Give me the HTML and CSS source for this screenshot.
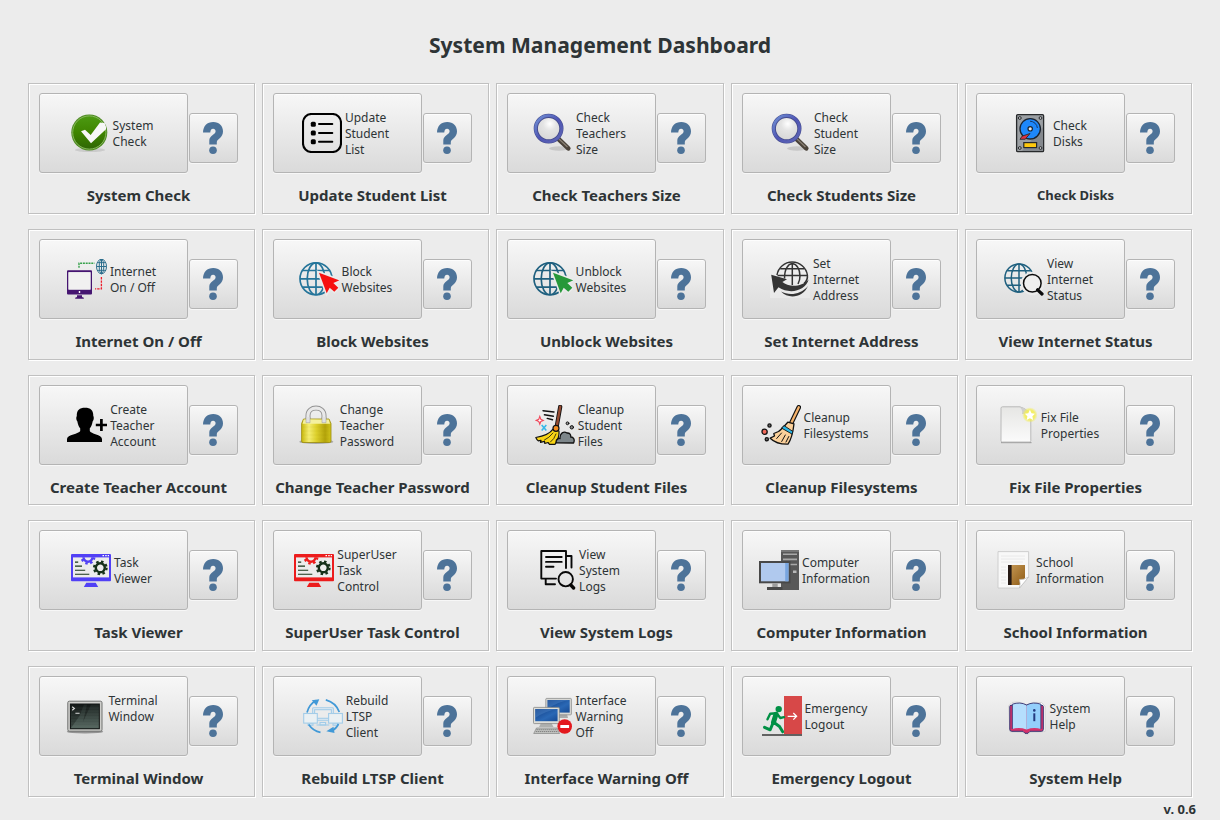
FILE: index.html
```html
<!DOCTYPE html>
<html lang="en">
<head>
<meta charset="utf-8">
<title>System Management Dashboard</title>
<link rel="stylesheet" href="styles.css">
</head>
<body>
<svg class="defs" aria-hidden="true">
  <defs>
    <linearGradient id="green" x1="0" y1="0" x2="0" y2="1"><stop offset="0" stop-color="#4c9a12"/><stop offset=".5" stop-color="#3f8500"/><stop offset="1" stop-color="#2f6605"/></linearGradient>
    <linearGradient id="ring" x1="0" y1="0" x2="1" y2="1"><stop offset="0" stop-color="#7192d6"/><stop offset=".5" stop-color="#4f55b4"/><stop offset="1" stop-color="#5e66b4"/></linearGradient>
    <radialGradient id="lens" cx=".55" cy=".3" r=".8"><stop offset="0" stop-color="#fff"/><stop offset=".35" stop-color="#e4e4e4"/><stop offset="1" stop-color="#d2d2d2"/></radialGradient>
    <linearGradient id="gold" x1="0" y1="0" x2="1" y2="0"><stop offset="0" stop-color="#c9b90c"/><stop offset=".25" stop-color="#f5ee72"/><stop offset=".5" stop-color="#ddd02c"/><stop offset=".8" stop-color="#b3a30a"/><stop offset="1" stop-color="#d2c51c"/></linearGradient>
    <linearGradient id="page" x1="0" y1="0" x2="0" y2="1"><stop offset="0" stop-color="#e6e6e4"/><stop offset="1" stop-color="#fbfbfb"/></linearGradient>
    <radialGradient id="glow"><stop offset="0" stop-color="#f6f05a"/><stop offset=".65" stop-color="#f3ee55" stop-opacity=".85"/><stop offset="1" stop-color="#f3ee55" stop-opacity="0"/></radialGradient>
    <linearGradient id="book" x1="0" y1="0" x2="1" y2="1"><stop offset="0" stop-color="#c79a56"/><stop offset="1" stop-color="#8f5c17"/></linearGradient>
    <linearGradient id="term" x1="0" y1="0" x2="0" y2="1"><stop offset="0" stop-color="#1d2422"/><stop offset="1" stop-color="#55665f"/></linearGradient>
    <linearGradient id="lcd" x1="0" y1="0" x2="1" y2="1"><stop offset="0" stop-color="#123f86"/><stop offset=".6" stop-color="#2a68b5"/><stop offset="1" stop-color="#174a94"/></linearGradient>

    <symbol id="i-help" viewBox="0 0 20 32"><path d="M0 10.6C.2 4 4 0 10.3 0 16.3 0 20 4 20 9.6 20 15.8 14.2 17 13.8 20V22.5H6.3V18.5C6.3 13.7 12.6 12.6 12.6 9.3 12.6 7.8 11.6 6.8 10.1 6.8 8.2 6.8 7.4 8.2 7.3 10.6Z"/><circle cx="10" cy="28.2" r="3.8"/></symbol>

    <symbol id="i-check" viewBox="0 0 40 40"><ellipse cx="20" cy="37" rx="15" ry="2" fill="#000" opacity=".1"/><circle cx="19.3" cy="19.5" r="18" fill="#4d8a21"/><circle cx="19.3" cy="19.5" r="16.6" fill="url(#green)" stroke="#8dbc63" stroke-width=".9"/><path d="M11 18.2 15 16.7 20.7 22.1 30 9.4 34.6 9.9 36 13.8 36 16.3 21 30.3Z" fill="#f7f7f7"/></symbol>

    <symbol id="i-list" viewBox="0 0 40 40"><rect x="1" y="1" width="38" height="38" rx="8.5" fill="none" stroke="#000" stroke-width="2.1"/><rect x="8.8" y="8.8" width="5" height="5" rx="1.5"/><rect x="8.8" y="17.4" width="5" height="5" rx="1.5"/><rect x="8.8" y="26.2" width="5" height="5" rx="1.5"/><path d="M17 11.1H30.3M17 19.9H30.3M17 28.7H30.3" stroke="#000" stroke-width="2" stroke-linecap="round"/></symbol>

    <symbol id="i-search" viewBox="0 0 40 40"><ellipse cx="26" cy="35.5" rx="10" ry="2.2" fill="#000" opacity=".12"/><path d="M25.5 26 35.3 35.3" stroke="#4a4239" stroke-width="4.6" stroke-linecap="round"/><path d="M25.5 25.5 34.5 34" stroke="#8a8175" stroke-width="1.2"/><circle cx="15.6" cy="15.6" r="12" fill="url(#lens)"/><circle cx="15.6" cy="15.6" r="12.8" fill="none" stroke="#434a8c" stroke-width="4.2"/><circle cx="15.6" cy="15.6" r="13" fill="none" stroke="url(#ring)" stroke-width="2.8"/></symbol>

    <symbol id="i-disk" viewBox="0 0 40 40"><rect x="6.6" y="1.6" width="27" height="37" rx="1.2" fill="#9b9fa3" stroke="#27292b" stroke-width="1.3"/><path d="M33 14V38H12Z" fill="#85898e"/><g fill="#c3c5c8" stroke="#27292b"><circle cx="9.8" cy="5" r="1.4"/><circle cx="30.5" cy="5" r="1.4"/><circle cx="9.8" cy="35" r="1.4"/><circle cx="30.5" cy="35" r="1.4"/></g><circle cx="20.2" cy="15.8" r="10.2" fill="#1e88fb" stroke="#1b2430" stroke-width="1.3"/><path d="M20 8.2A7.6 7.6 0 0 1 27.4 15" fill="none" stroke="#173a6b" stroke-width="1"/><circle cx="20.2" cy="15.8" r="2.2" fill="#e9e9e9" stroke="#1b2430" stroke-width="1.2"/><path d="M10 26.3 12 23.2 20 20.5 15.3 26.2Z" fill="#e0303f" stroke="#27292b" stroke-width=".9"/><rect x="13.8" y="29.6" width="12.8" height="5" fill="#ffc90d" stroke="#27292b" stroke-width="1.2"/></symbol>

    <symbol id="globe" viewBox="0 0 34 34"><g fill="none" stroke="currentColor" stroke-width="1.7"><circle cx="17" cy="17" r="16"/><ellipse cx="17" cy="17" rx="8.8" ry="16"/><path d="M17 1V33M1 17H33M3.6 8.7H30.4M3.6 25.3H30.4"/></g></symbol>

    <symbol id="i-net" viewBox="0 0 40 40"><path d="M0 12.3Q0 11.3 1 11.3H24Q25 11.3 25 12.3V34.4Q25 35.4 24 35.4H1Q0 35.4 0 34.4ZM1.5 13.2V30.6H23.5V13.2Z" fill="#451571" fill-rule="evenodd"/><rect x="1.5" y="13.2" width="22" height="17.4" fill="#f1f1f1"/><rect x="11.8" y="32" width="1.4" height="2" fill="#fff"/><path d="M10 36.3H15V38L16.8 38.8V39.8H8.2V38.8L10 38Z" fill="#451571"/><path d="M12 8.7V4.2H27.5" fill="none" stroke="#35a14a" stroke-width="1.4" stroke-dasharray="2 .8"/><path d="M34.4 18V29.8H28" fill="none" stroke="#ec1c2b" stroke-width="1.3" stroke-dasharray="2.4 1"/><g fill="none" stroke="#2b6d8c" stroke-width="1"><ellipse cx="34.5" cy="7.5" rx="5" ry="7.3"/><ellipse cx="34.5" cy="7.5" rx="2.3" ry="7.3"/><path d="M34.5 0V15M29.5 7.5H39.5M30.3 3.7H38.7M30.3 11.3H38.7"/></g></symbol>

    <symbol id="i-web" viewBox="0 0 40 40"><use href="#globe" x="0" y="2.8" width="34" height="34"/><path d="M20 13.7 40.3 21.3 34.3 24 39.3 28.7 35.3 32.7 30.7 28.7 27.7 34.3Z" fill="var(--cursor)" stroke="#ebebeb" stroke-width="3" paint-order="stroke"/></symbol>

    <symbol id="i-setip" viewBox="0 0 40 40"><rect x="0" y="2" width="40" height="37" fill="#efefef" opacity=".6"/><g fill="none" stroke="#333" stroke-width="1.5"><path d="M7 16A15.4 15.4 0 0 1 37.4 16Q38 21 34 24.5"/><path d="M14.5 19.5C14.5 10 18 5 22.3 4.5 26.7 5 30 10 30 17 30 21 29 23 28 25M22.3 4V26M7.5 16.5H37M10.2 9.8H34.4"/></g><path d="M1.2 15.7 17 20.2 12.4 23C18 28 31 28.8 38.6 20.5 36 31.5 20 36 8.5 28.3L4 34Z" fill="#353535"/><path d="M11 32.6C19 37 31 35.7 38 27 33.5 38 19 41 11 32.6Z" fill="#353535"/></symbol>

    <symbol id="i-netview" viewBox="0 0 40 40"><use href="#globe" x="0" y="4" width="30" height="30"/><circle cx="28.5" cy="24.5" r="11.8" fill="#ebebeb"/><circle cx="28.3" cy="24.3" r="8.8" fill="#efefef" stroke="#0b0b0b" stroke-width="1.5"/><path d="M33.6 30.8 38 35" stroke="#0b0b0b" stroke-width="3.2" stroke-linecap="round"/></symbol>

    <symbol id="i-user" viewBox="0 0 40 40"><path d="M18 2.8C23.5 2.8 26.4 5.2 26.3 11 27.2 12 26.8 15.5 25.7 16.2 25 20 24 21.8 22.8 23.3V26C23.5 29 35 29.4 35 34V37H0V34C0 29.4 12.3 29 13.2 26V23.3C12 21.8 11 20 10.3 16.2 9.2 15.5 8.9 12 9.8 11 9.6 5.2 12.5 2.8 18 2.8Z"/><path d="M34.4 14V26M28.8 20H40" stroke="#000" stroke-width="2.7"/></symbol>

    <symbol id="i-lock" viewBox="0 0 40 40"><ellipse cx="19.3" cy="36.7" rx="17" ry="2.3" opacity=".25"/><path d="M11 17V10.5C11 .6 27 .6 27 10.5V17" fill="none" stroke="#929292" stroke-width="5"/><path d="M11 17V10.5C11 .6 27 .6 27 10.5V17" fill="none" stroke="#e9e9e9" stroke-width="3.2"/><path d="M6.5 14H32L34 18.5V36Q34 37.5 32.5 37.5H6Q4.6 37.5 4.6 36V18.5Z" fill="url(#gold)" stroke="#9a8b0b" stroke-width=".8"/><path d="M6.8 14.4H31.8L33 18.8H5.6Z" fill="#f4f0a0"/><path d="M9 12V17.7H13V12M25 12V17.7H29V12" fill="#e1e1e1" stroke="#999" stroke-width=".5"/><path d="M6 22H33M6 26H33M6 30H33M6 34H33" stroke="#988a05" stroke-width=".5" opacity=".15"/></symbol>

    <symbol id="i-sweep" viewBox="0 0 40 40"><g stroke="#111" stroke-linejoin="round" stroke-linecap="round"><path d="M8 5.7 19 7M9.4 9.8 18.4 11.2M12.2 13.4 17.5 14.8" stroke-width="1.4"/><path d="M25.2 1.8 21.8 21" stroke-width="4.2"/><path d="M25.2 1.8 21.8 21" stroke="#954b32" stroke-width="2.4"/><path d="M18 24.2C14 30 7 31.5 .8 32.5 1.5 34 2 35 3.2 35.8L6 35.3 5.5 37.3 9.5 36.4 9.8 38.5 13 37.5 14.5 39.3H20C23 35 24.5 31 24 26Z" fill="#f8d414" stroke-width="1.2"/><path d="M18 28Q14 33 9.5 35M21 29Q19.5 34 15.5 37" fill="none" stroke-width=".8"/><circle cx="21" cy="23.3" r="3" fill="#f28a1d" stroke-width="1.2"/><path d="M21.2 37.8C20.5 34 24 33.3 25 33.5 24.5 28 29 25.8 32 28 35 27.8 36 30 35.7 32 38.8 32 40 35 38.6 38Z" fill="#7d868a" stroke-width="1.3"/><circle cx="32.5" cy="18.3" r="1.4" fill="#999"/><circle cx="36.8" cy="22.3" r="1.7" fill="#888"/></g><path d="M4.8 11.4 5.8 14.3 8.3 15.4 5.8 16.5 4.8 19.2 3.8 16.5 1.2 15.4 3.8 14.3Z" fill="#fff" stroke="#f1485b" stroke-width="1.1"/><path d="M6.7 20 11.3 25.5M11.3 20 6.7 25.5" stroke="#35b7e8" stroke-width="1.6"/></symbol>

    <symbol id="i-broom" viewBox="0 0 40 40"><g stroke="#111" stroke-linejoin="round" stroke-linecap="round"><path d="M37.8 2.3 30.5 17.5" stroke-width="4.6"/><path d="M37.8 2.3 30.5 17.5" stroke="#f5b36d" stroke-width="2.3"/><path d="M26.8 17.2 33 18.8C32.3 25 31.3 33 27 39.2 18 39.4 12.5 36.5 9.2 33.2L13.5 31 12.8 28.5 17.5 26.5C20.8 24 23.5 21 26.8 17.2Z" fill="#fbd09a" stroke-width="1.3"/><path d="M23.3 20.8 31.8 26.4 31.2 29.2 20.8 23.2Z" fill="#29b5e6" stroke-width=".9"/><path d="M20.5 28 15.7 33.5M24.3 30 20.7 36.5M27.8 31.5 25 37" fill="none" stroke-width="1"/><circle cx="3.6" cy="26.8" r="2.6" fill="#f26a5a" stroke-width="1.3"/><circle cx="8.5" cy="20.5" r="1.6" fill="#666" stroke-width="1.3"/><circle cx="5.8" cy="34.3" r="1.6" fill="#666" stroke-width="1.3"/></g></symbol>

    <symbol id="i-file" viewBox="0 0 40 40"><path d="M3 37H33.5V38.2H3Z" fill="#777" opacity=".6"/><path d="M4.5 1.8H22Q32.8 5 32.8 14V35.5Q32.8 37 31.3 37H4.5Q3 37 3 35.5V3.3Q3 1.8 4.5 1.8Z" fill="url(#page)" stroke="#b4b4b4" stroke-width=".9"/><path d="M21 1.8Q25 4 24 9 30 8.5 32.8 14 32.5 4 21 1.8Z" fill="#cfcfcf"/><circle cx="31.9" cy="10" r="7.8" fill="url(#glow)"/><path d="M31.9 4.8 33.5 8.2 37 8.7 34.4 11.3 35.1 15 31.9 13.2 28.7 15 29.4 11.3 26.8 8.7 30.3 8.2Z" fill="#fff"/></symbol>

    <symbol id="gear" viewBox="-8 -8 16 16"><g fill="none" stroke="currentColor"><circle r="4.5" stroke-width="2.4"/><circle r="6.3" stroke-width="2.2" stroke-dasharray="2.5 2.448"/></g></symbol>

    <symbol id="i-task" viewBox="0 0 40 40"><rect x="0" y="4" width="40" height="27.2" rx="1" fill="currentColor"/><rect x="2" y="7.4" width="36" height="20" fill="#ececec"/><path d="M31.5 5.7H33M34.2 5.7H35.7M36.7 5.7H38" stroke="#fff" stroke-width="1.2"/><path d="M15.3 32.7H24.7L27.2 37H12.8Z" fill="currentColor"/><svg x="2" y="7.2" width="36" height="12"><use href="#gear" x="7" y="-8" width="16" height="16"/></svg><path d="M4 12.1H7.2M4 16.1H11M4 20.2H14.2M4 24.3H18.3" stroke="#173419" stroke-width="1.1"/><g color="#16311a"><use href="#gear" x="21.3" y="9.8" width="16" height="16"/></g></symbol>

    <symbol id="i-logs" viewBox="0 0 40 40"><g fill="none" stroke="#080808" stroke-width="1.9" stroke-linejoin="round" stroke-linecap="round"><path d="M20 28.6H5.3V1H30V18M30.2 6H35.5V17.5M9.7 29V34.3H19M10 7H25.7M10 11.9H25.7M10 16.8H17.5"/><circle cx="29.7" cy="29.2" r="7.2"/></g><path d="M34.8 35 37.6 38" stroke="#080808" stroke-width="3.3" stroke-linecap="round"/></symbol>

    <symbol id="i-pc" viewBox="0 0 40 40"><rect x="22" y="0" width="18" height="40" fill="#585858"/><path d="M24 4.3H38M24 9.4H38M24 14.5H38" stroke="#a8a8a8" stroke-width="1.6"/><path d="M22 1H40" stroke="#777" stroke-width="2"/><rect x="34" y="20.5" width="3.5" height="2.5" fill="#b9b9b9"/><rect x="0" y="11" width="31.5" height="22.3" fill="#484848"/><rect x="2" y="13" width="27.5" height="18.3" fill="#b0c9ee"/><rect x="26.2" y="13" width="3.3" height="18.3" fill="#78a5df"/><rect x="13.3" y="33.3" width="5.4" height="3.8" fill="#9d9d9d"/><rect x="8" y="37" width="15.5" height="3" fill="#484848"/></symbol>

    <symbol id="i-school" viewBox="0 0 40 40"><path d="M5 1.6H35.6V27L26.5 38H5Z" fill="#f8f8f8" stroke="#cbcbcb" stroke-width=".9"/><path d="M8 6H32M8 9H32M8 12H30M8 17H13M8 20H13M8 23H13M8 27H13M8 30H13M8 33H13" stroke="#e4e4e4" stroke-width=".8"/><path d="M15 15H32V28L26.5 35H15Z" fill="url(#book)"/><path d="M15 15H18.6V35H15Z" fill="#261a15"/><path d="M35.6 27 26.5 38Q27.8 34 26.5 29.5 31 30 35.6 27Z" fill="#fff" stroke="#bbb" stroke-width=".7"/></symbol>

    <symbol id="i-term" viewBox="0 0 40 40"><ellipse cx="20" cy="35.8" rx="18.2" ry="1.7" opacity=".35"/><rect x="2.8" y="5.2" width="34.2" height="30" rx="1.5" fill="#cfcfcc" stroke="#6e706e" stroke-width="1"/><rect x="4.9" y="7.5" width="30" height="25.8" fill="#131716"/><rect x="6" y="8.6" width="27.8" height="23.6" fill="url(#term)"/><path d="M19 8.6 14.5 20 6 32V8.6ZM26 8.6 18 26 22 8.6Z" fill="#000" opacity=".3"/><path d="M6 12H34M6 15H34M6 18H34M6 21H34M6 24H34M6 27H34M6 30H34" stroke="#a7c0b5" stroke-width=".5" opacity=".15"/><path d="M7.2 10.8 9.4 12.5 7.2 14.2M10.4 17.2H14.6" fill="none" stroke="#ddd" stroke-width="1.1"/></symbol>

    <symbol id="i-rebuild" viewBox="0 0 40 40"><g fill="#e3edf3" stroke="#a3cce8" stroke-width="1.1"><rect x="9.7" y="11.8" width="20.6" height="12.4" rx=".8"/><rect x="11.6" y="13.7" width="16.8" height="8.6" fill="#ececec"/><rect x="17" y="26.5" width="5.6" height="2.5"/><path d="M13.5 29H26.3"/><rect x=".7" y="17.5" width="13.6" height="9.6" fill="#eaf0f3"/><rect x="25.6" y="17.5" width="13.8" height="9.6" fill="#eaf0f3"/><path d="M5 27.8H10V29.2H5ZM30 27.8H35V29.2H30Z"/></g><g fill="none" stroke="#4199d7" stroke-width="1.7"><path d="M4 16.5Q6.2 8.5 12.8 4.6M22.8 3.9Q33 6.8 36.3 16M5.7 28.5Q10 35 17.5 36.3M35.5 28Q33 33 28.8 34.5"/></g><path d="M8.8 4.3 16.3 3.2 13.5 9.8ZM30.5 30.8 23.3 35.2 31.5 37Z" fill="#4199d7"/></symbol>

    <symbol id="i-iface" viewBox="0 0 40 40"><path d="M20 18H34L35 22H20Z" fill="#aaa"/><rect x="12.8" y="2.4" width="25.6" height="16.4" rx=".8" fill="#d8d8d5" stroke="#8b8d8b" stroke-width=".8"/><rect x="14.5" y="4" width="22.2" height="12.6" fill="url(#lcd)"/><path d="M14.5 4H36.7Q24 6 14.5 13Z" fill="#5d92d0" opacity=".35"/><path d="M8.5 26H18L20.5 31H6Z" fill="#aeb0ae"/><rect x=".5" y="11.4" width="25.8" height="16.2" rx=".8" fill="#deded9" stroke="#858785" stroke-width=".8"/><rect x="2.2" y="13" width="22.4" height="12.2" fill="url(#lcd)"/><path d="M2.2 13H24.6Q12 15 2.2 22Z" fill="#5d92d0" opacity=".35"/><path d="M3.5 32H24L26.5 37.5H.7Z" fill="#c4c6c3" stroke="#777" stroke-width=".6"/><path d="M3.5 33.7H24M2.8 35.6H25" stroke="#777" stroke-width=".9" stroke-dasharray="1.4 .6"/><circle cx="31.7" cy="30.5" r="7.3" fill="#e3191e"/><rect x="27.3" y="29" width="8.8" height="3" rx=".5" fill="#fff"/></symbol>

    <symbol id="i-exit" viewBox="0 0 40 40"><rect x="22" y="0" width="18" height="38.2" fill="#d74848"/><rect x="0" y="38.1" width="40" height="1.8" fill="#555"/><circle cx="16.7" cy="13.1" r="3.2" fill="#009045"/><g fill="none" stroke="#009045" stroke-linecap="round" stroke-linejoin="round"><path d="M14 18.2 11.5 26.2" stroke-width="5"/><path d="M14.3 17.2 8.2 17.8 5.5 23.3M15.8 18.8 18.3 22 22 21.2" stroke-width="2.4"/><path d="M11 27 8.2 33.8 2.5 31.3M12 26.5 17.5 30.5 20.7 35.8" stroke-width="3"/></g><path d="M25.7 20.3H34.5M31.3 17 34.6 20.3 31.3 23.6" fill="none" stroke="#fff" stroke-width="1.3"/></symbol>

    <symbol id="i-book" viewBox="0 0 40 40"><path d="M5 6.5Q14 5 19.5 9 26 5 34.5 6.5L38 10V35.5L23 36.5 20 39 17 36.5 3 35.8 1.5 10Z" fill="#fff" stroke="#c9c9c9" stroke-width=".7"/><path d="M2.8 10.5Q2.8 9.3 4 9.3H35Q36.3 9.3 36.3 10.5V33.5Q36.3 35.3 34.5 35.3H23L21 37.3H18L16 35.3H4.8Q2.8 35.3 2.8 33.5Z" fill="#d6336c" stroke="#33306f" stroke-width="1"/><path d="M5.3 8.2Q13 5.5 19.6 9V33.5Q12 30.8 5.3 33Z" fill="#b5defd"/><path d="M33.9 8.2Q26 5.5 19.6 9V33.5Q27 30.8 33.9 33Z" fill="#94cffb"/><path d="M5.3 33V8.2Q13 5.5 19.6 9 26 5.5 33.9 8.2V33" fill="none" stroke="#33306f" stroke-width=".9"/><circle cx="27.3" cy="14.4" r="1.3" fill="#243b80"/><path d="M27.3 17.3V25.2" fill="none" stroke="#243b80" stroke-width="2"/></symbol>
  </defs>
</svg>

<h1 class="title">System Management Dashboard</h1>

<main class="grid">
  <section class="card"><div class="row"><button class="action"><svg class="icon"><use href="#i-check"/></svg><span>System<br>Check</span></button><button class="help" aria-label="Help"><svg><use href="#i-help"/></svg></button></div><h2>System Check</h2></section>
  <section class="card"><div class="row"><button class="action"><svg class="icon"><use href="#i-list"/></svg><span>Update<br>Student<br>List</span></button><button class="help" aria-label="Help"><svg><use href="#i-help"/></svg></button></div><h2>Update Student List</h2></section>
  <section class="card"><div class="row"><button class="action"><svg class="icon"><use href="#i-search"/></svg><span>Check<br>Teachers<br>Size</span></button><button class="help" aria-label="Help"><svg><use href="#i-help"/></svg></button></div><h2>Check Teachers Size</h2></section>
  <section class="card"><div class="row"><button class="action"><svg class="icon"><use href="#i-search"/></svg><span>Check<br>Student<br>Size</span></button><button class="help" aria-label="Help"><svg><use href="#i-help"/></svg></button></div><h2>Check Students Size</h2></section>
  <section class="card"><div class="row"><button class="action"><svg class="icon"><use href="#i-disk"/></svg><span>Check<br>Disks</span></button><button class="help" aria-label="Help"><svg><use href="#i-help"/></svg></button></div><h2 class="small">Check Disks</h2></section>

  <section class="card"><div class="row"><button class="action"><svg class="icon"><use href="#i-net"/></svg><span>Internet<br>On / Off</span></button><button class="help" aria-label="Help"><svg><use href="#i-help"/></svg></button></div><h2>Internet On / Off</h2></section>
  <section class="card"><div class="row"><button class="action"><svg class="icon block"><use href="#i-web"/></svg><span>Block<br>Websites</span></button><button class="help" aria-label="Help"><svg><use href="#i-help"/></svg></button></div><h2>Block Websites</h2></section>
  <section class="card"><div class="row"><button class="action"><svg class="icon unblock"><use href="#i-web"/></svg><span>Unblock<br>Websites</span></button><button class="help" aria-label="Help"><svg><use href="#i-help"/></svg></button></div><h2>Unblock Websites</h2></section>
  <section class="card"><div class="row"><button class="action"><svg class="icon"><use href="#i-setip"/></svg><span>Set<br>Internet<br>Address</span></button><button class="help" aria-label="Help"><svg><use href="#i-help"/></svg></button></div><h2>Set Internet Address</h2></section>
  <section class="card"><div class="row"><button class="action"><svg class="icon unblock"><use href="#i-netview"/></svg><span>View<br>Internet<br>Status</span></button><button class="help" aria-label="Help"><svg><use href="#i-help"/></svg></button></div><h2>View Internet Status</h2></section>

  <section class="card"><div class="row"><button class="action"><svg class="icon"><use href="#i-user"/></svg><span>Create<br>Teacher<br>Account</span></button><button class="help" aria-label="Help"><svg><use href="#i-help"/></svg></button></div><h2>Create Teacher Account</h2></section>
  <section class="card"><div class="row"><button class="action"><svg class="icon"><use href="#i-lock"/></svg><span>Change<br>Teacher<br>Password</span></button><button class="help" aria-label="Help"><svg><use href="#i-help"/></svg></button></div><h2>Change Teacher Password</h2></section>
  <section class="card"><div class="row"><button class="action"><svg class="icon"><use href="#i-sweep"/></svg><span>Cleanup<br>Student<br>Files</span></button><button class="help" aria-label="Help"><svg><use href="#i-help"/></svg></button></div><h2>Cleanup Student Files</h2></section>
  <section class="card"><div class="row"><button class="action"><svg class="icon"><use href="#i-broom"/></svg><span>Cleanup<br>Filesystems</span></button><button class="help" aria-label="Help"><svg><use href="#i-help"/></svg></button></div><h2>Cleanup Filesystems</h2></section>
  <section class="card"><div class="row"><button class="action"><svg class="icon"><use href="#i-file"/></svg><span>Fix File<br>Properties</span></button><button class="help" aria-label="Help"><svg><use href="#i-help"/></svg></button></div><h2>Fix File Properties</h2></section>

  <section class="card"><div class="row"><button class="action"><svg class="icon task"><use href="#i-task"/></svg><span>Task<br>Viewer</span></button><button class="help" aria-label="Help"><svg><use href="#i-help"/></svg></button></div><h2>Task Viewer</h2></section>
  <section class="card"><div class="row"><button class="action"><svg class="icon super"><use href="#i-task"/></svg><span>SuperUser<br>Task<br>Control</span></button><button class="help" aria-label="Help"><svg><use href="#i-help"/></svg></button></div><h2>SuperUser Task Control</h2></section>
  <section class="card"><div class="row"><button class="action logs"><svg class="icon"><use href="#i-logs"/></svg><span>View<br>System<br>Logs</span></button><button class="help" aria-label="Help"><svg><use href="#i-help"/></svg></button></div><h2>View System Logs</h2></section>
  <section class="card"><div class="row"><button class="action"><svg class="icon"><use href="#i-pc"/></svg><span>Computer<br>Information</span></button><button class="help" aria-label="Help"><svg><use href="#i-help"/></svg></button></div><h2>Computer Information</h2></section>
  <section class="card"><div class="row"><button class="action"><svg class="icon"><use href="#i-school"/></svg><span>School<br>Information</span></button><button class="help" aria-label="Help"><svg><use href="#i-help"/></svg></button></div><h2>School Information</h2></section>

  <section class="card"><div class="row"><button class="action"><svg class="icon"><use href="#i-term"/></svg><span>Terminal<br>Window<br>&nbsp;</span></button><button class="help" aria-label="Help"><svg><use href="#i-help"/></svg></button></div><h2>Terminal Window</h2></section>
  <section class="card"><div class="row"><button class="action"><svg class="icon"><use href="#i-rebuild"/></svg><span>Rebuild<br>LTSP<br>Client</span></button><button class="help" aria-label="Help"><svg><use href="#i-help"/></svg></button></div><h2>Rebuild LTSP Client</h2></section>
  <section class="card"><div class="row"><button class="action"><svg class="icon"><use href="#i-iface"/></svg><span>Interface<br>Warning<br>Off</span></button><button class="help" aria-label="Help"><svg><use href="#i-help"/></svg></button></div><h2>Interface Warning Off</h2></section>
  <section class="card"><div class="row"><button class="action"><svg class="icon"><use href="#i-exit"/></svg><span>Emergency<br>Logout</span></button><button class="help" aria-label="Help"><svg><use href="#i-help"/></svg></button></div><h2>Emergency Logout</h2></section>
  <section class="card"><div class="row"><button class="action"><svg class="icon"><use href="#i-book"/></svg><span>System<br>Help</span></button><button class="help" aria-label="Help"><svg><use href="#i-help"/></svg></button></div><h2>System Help</h2></section>
</main>

<footer class="version">v. 0.6</footer>
</body>
</html>
```

FILE: styles.css
```css
* {
  box-sizing: border-box;
}

body {
  margin: 0;
  width: 1220px;
  height: 820px;
  overflow: hidden;
  background: #ececec;
  color: #2e3436;
  font-family: "Noto Sans", sans-serif;
}

.defs {
  display: block;
  width: 0;
  height: 0;
}

.title {
  margin: 0;
  width: 1200px;
  height: 83px;
  padding-top: 30px;
  font-size: 21.1px;
  line-height: 30px;
  font-weight: 700;
  text-align: center;
}

.grid {
  display: grid;
  grid-template-columns: 227px 227px 228px 227px 227px;
  grid-template-rows: 131px 131px 130px 131px 131px;
  gap: 15px 7px;
  padding-left: 28px;
}

.card {
  border: 1px solid #c0c0c0;
  box-shadow: inset 1px 1px #fff, 1px 1px #fff;
  padding: 9px 0 0 10px;
}

.row {
  display: flex;
  align-items: flex-start;
  gap: 1px;
}

.card h2 {
  margin: 12px 0 0;
  width: 199px;
  font-size: 15px;
  line-height: 20px;
  font-weight: 700;
  text-align: center;
  white-space: nowrap;
}

.card h2.small {
  font-size: 13px;
}

button {
  display: flex;
  align-items: center;
  justify-content: center;
  margin: 0;
  border: 1px solid #b4b4b4;
  border-radius: 3px;
  background: linear-gradient(#f7f7f7, #dadada);
  box-shadow: inset 0 1px #fdfdfd, 0 1px #f7f7f7;
  color: inherit;
  font: inherit;
}

.action {
  width: 149px;
  height: 80px;
  gap: 3px;
  padding: 0 4px 0 0;
  font-size: 12px;
  line-height: 16px;
  text-align: left;
}

.action span {
  padding-top: 2px;
}

.action.logs {
  padding-right: 7px;
}

.icon {
  flex: none;
  width: 40px;
  height: 40px;
}

.help {
  width: 49px;
  height: 50px;
  margin-top: 20px;
  padding: 0 1px 0 0;
  fill: #4d7399;
}

.help svg {
  width: 20px;
  height: 32px;
}

.block {
  color: #25759a;
  --cursor: #f61010;
}

.unblock {
  color: #1f607f;
  --cursor: #27983a;
}

.task {
  color: #5140f5;
}

.super {
  color: #ec1c1c;
}

.version {
  width: 1196px;
  padding-top: 4px;
  font-size: 13px;
  line-height: 17px;
  font-weight: 700;
  text-align: right;
}
```
